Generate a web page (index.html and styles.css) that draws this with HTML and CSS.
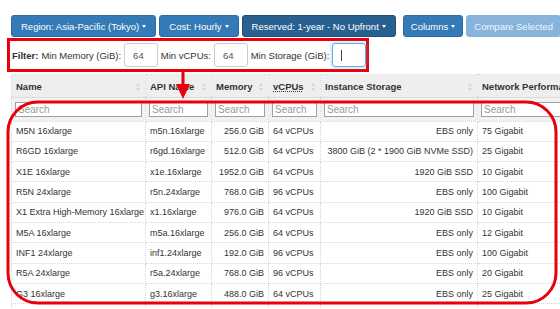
FILE: index.html
```html
<!DOCTYPE html>
<html lang="en">
<head>
  <meta charset="UTF-8" />
  <title>EC2 Instances</title>
  <link rel="stylesheet" href="styles.css">
</head>
<body>
  <div class="page">
    <div class="toolbar">
      <div class="btn-group">
        <button class="btn">Region: Asia-Pacific (Tokyo) <span class="caret"></span></button>
        <button class="btn">Cost: Hourly <span class="caret"></span></button>
        <button class="btn btn-active">Reserved: 1-year - No Upfront <span class="caret"></span></button>
      </div>
      <div class="btn-group">
        <button class="btn btn-narrow">Columns <span class="caret"></span></button>
        <button class="btn btn-narrow btn-disabled">Compare Selected</button>
      </div>
    </div>

    <div class="filter">
      <b>Filter:</b> Min Memory (GiB):
      <span class="num-input">64</span>
      Min vCPUs:
      <span class="num-input">64</span>
      Min Storage (GiB):
      <span class="num-input focused"><span class="cursor"></span></span>
    </div>

    <div class="table-wrap">
      <table class="data">
        <colgroup>
          <col style="width:134px">
          <col style="width:66px">
          <col style="width:57px">
          <col style="width:52px">
          <col style="width:157px">
          <col style="width:130px">
        </colgroup>
        <thead>
          <tr class="head">
            <th>Name <span class="sort"></span></th>
            <th>API Name <span class="sort"></span></th>
            <th>Memory <span class="sort"></span></th>
            <th><abbr>vCPUs</abbr> <span class="sort"></span></th>
            <th>Instance Storage <span class="sort"></span></th>
            <th>Network Performance <span class="sort"></span></th>
          </tr>
          <tr class="search">
            <th><div class="search-box">Search</div></th>
            <th><div class="search-box">Search</div></th>
            <th><div class="search-box">Search</div></th>
            <th><div class="search-box">Search</div></th>
            <th><div class="search-box">Search</div></th>
            <th><div class="search-box">Search</div></th>
          </tr>
        </thead>
        <tbody>
          <tr><td>M5N 16xlarge</td><td>m5n.16xlarge</td><td class="r">256.0 GiB</td><td>64 vCPUs</td><td class="r">EBS only</td><td>75 Gigabit</td></tr>
          <tr><td>R6GD 16xlarge</td><td>r6gd.16xlarge</td><td class="r">512.0 GiB</td><td>64 vCPUs</td><td class="r">3800 GiB (2 * 1900 GiB NVMe SSD)</td><td>25 Gigabit</td></tr>
          <tr><td>X1E 16xlarge</td><td>x1e.16xlarge</td><td class="r">1952.0 GiB</td><td>64 vCPUs</td><td class="r">1920 GiB SSD</td><td>10 Gigabit</td></tr>
          <tr><td>R5N 24xlarge</td><td>r5n.24xlarge</td><td class="r">768.0 GiB</td><td>96 vCPUs</td><td class="r">EBS only</td><td>100 Gigabit</td></tr>
          <tr><td>X1 Extra High-Memory 16xlarge</td><td>x1.16xlarge</td><td class="r">976.0 GiB</td><td>64 vCPUs</td><td class="r">1920 GiB SSD</td><td>10 Gigabit</td></tr>
          <tr><td>M5A 16xlarge</td><td>m5a.16xlarge</td><td class="r">256.0 GiB</td><td>64 vCPUs</td><td class="r">EBS only</td><td>12 Gigabit</td></tr>
          <tr><td>INF1 24xlarge</td><td>inf1.24xlarge</td><td class="r">192.0 GiB</td><td>96 vCPUs</td><td class="r">EBS only</td><td>100 Gigabit</td></tr>
          <tr><td>R5A 24xlarge</td><td>r5a.24xlarge</td><td class="r">768.0 GiB</td><td>96 vCPUs</td><td class="r">EBS only</td><td>20 Gigabit</td></tr>
          <tr><td>G3 16xlarge</td><td>g3.16xlarge</td><td class="r">488.0 GiB</td><td>64 vCPUs</td><td class="r">EBS only</td><td>25 Gigabit</td></tr>
          <tr><td></td><td></td><td></td><td></td><td></td><td></td></tr>
        </tbody>
      </table>
    </div>

    <!-- red annotation drawn over the screenshot -->
    <svg class="annotation" width="560" height="309" viewBox="0 0 560 309">
      <line x1="183" y1="72" x2="183" y2="86" stroke="#e8000b" stroke-width="3"/>
      <polygon points="176,84 190,84 183,99" fill="#e8000b"/>
      <rect x="8" y="102" width="548" height="201" rx="30" ry="30" fill="none" stroke="#e8000b" stroke-width="3"/>
    </svg>
  </div>
</body>
</html>
```

FILE: styles.css
```css
* { box-sizing: border-box; }
html, body {
  margin: 0;
  height: 309px;
  overflow: hidden;
  background: #fff;
}
body {
  font-family: "Liberation Sans", Arial, sans-serif;
  color: #333;
}
.page {
  position: relative;
  padding: 15px 0 0 11px;
  height: 309px;
}
.toolbar {
  display: flex;
  gap: 7px;
  height: 22px;
}
.btn-group {
  display: flex;
  gap: 3px;
}
.btn {
  height: 22px;
  padding: 0 9px;
  font-family: inherit;
  font-size: 9.5px;
  color: #fff;
  background: #337ab7;
  border: 1px solid #2e6da4;
  border-radius: 3px;
  white-space: nowrap;
  display: flex;
  align-items: center;
  gap: 3px;
}
.btn-narrow { padding: 0 7px; }
.btn-active {
  background: #286090;
  border-color: #204d74;
}
.btn-disabled {
  background: #88b3da;
  border-color: #88b3da;
  color: #f2f7fb;
}
.caret {
  width: 0;
  height: 0;
  border-top: 3px solid #fff;
  border-left: 2.5px solid transparent;
  border-right: 2.5px solid transparent;
}
.filter {
  margin: 1px 0 0 -4px;
  width: 362px;
  height: 34px;
  border: 3px solid #e8000b;
  padding: 0 0 0 2px;
  display: flex;
  align-items: center;
  gap: 3px;
  font-size: 9.5px;
  white-space: nowrap;
}
.num-input {
  display: inline-flex;
  align-items: center;
  width: 34px;
  height: 24px;
  padding-left: 8px;
  border: 1px solid #ccc;
  border-radius: 3px;
  background: #fff;
  font-size: 9.5px;
  color: #555;
}
.num-input.focused {
  border-color: #66afe9;
  box-shadow: 0 0 4px rgba(102, 175, 233, 0.6);
}
.cursor {
  display: block;
  width: 1px;
  height: 11px;
  background: #444;
}
.table-wrap {
  margin-top: 2px;
  overflow: hidden;
  width: 549px;
}
.data {
  table-layout: fixed;
  border-collapse: collapse;
  width: 596px;
  font-size: 9px;
}
.data th, .data td {
  border: 1px dotted #d6d6d6;
  padding: 0 4px;
  text-align: left;
  white-space: nowrap;
  overflow: hidden;
}
.head th {
  position: relative;
  height: 23px;
  background: #eeeeee;
  font-size: 9.5px;
  font-weight: bold;
  color: #333;
  border-bottom: 1px solid #dcdcdc;
}
.head abbr {
  text-decoration: underline dotted;
}
.sort {
  position: absolute;
  right: 4px;
  top: 8px;
  width: 5px;
  height: 8px;
}
.sort::before, .sort::after {
  content: "";
  position: absolute;
  left: 0;
  border-left: 2.5px solid transparent;
  border-right: 2.5px solid transparent;
}
.sort::before { top: 0; border-bottom: 3.5px solid #d4d4d4; }
.sort::after { bottom: 0; border-top: 3.5px solid #d4d4d4; }
.search th {
  height: 23.5px;
  background: #f2f2f2;
  padding: 0 3px;
  font-weight: normal;
}
.search-box {
  height: 15px;
  border: 1px solid #a0a0a0;
  background: #fff;
  padding-left: 2px;
  font-size: 10px;
  line-height: 13px;
  color: #9a9a9a;
  overflow: hidden;
}
.data td {
  height: 20.3px;
  color: #333;
}
.data td.r { text-align: right; }
.annotation {
  position: absolute;
  left: 0;
  top: 0;
  pointer-events: none;
}
```
